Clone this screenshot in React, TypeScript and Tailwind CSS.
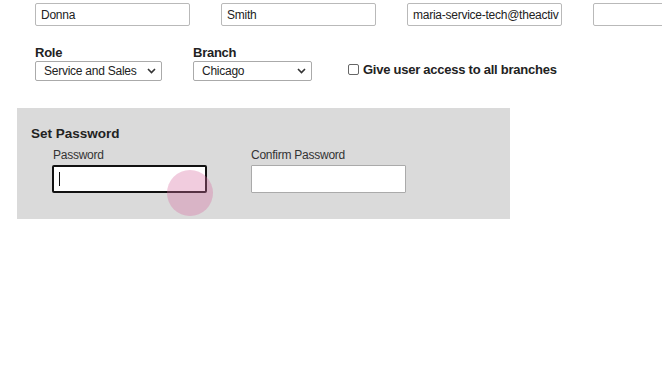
import React from "react";

const Chevron = () => (
  <svg width="9" height="6" viewBox="0 0 9 6" className="shrink-0">
    <path d="M1 1 L4.5 4.5 L8 1" fill="none" stroke="#333" strokeWidth="1.6" />
  </svg>
);

function TextBox({ value, w }: { value?: string; w: string }) {
  return (
    <div
      className={`${w} h-[23px] shrink-0 border border-[#b9b9b9] rounded-[2px] bg-white px-[5px] flex items-center text-[12px] tracking-[-0.25px] text-[#222] overflow-hidden whitespace-nowrap`}
    >
      {value}
    </div>
  );
}

function FakeSelect({ value, w }: { value: string; w: string }) {
  return (
    <div
      className={`${w} h-[20px] border border-[#aaa] rounded-[2px] bg-white pl-[8px] pr-[5px] flex items-center justify-between text-[12px] tracking-[-0.25px] text-[#222] whitespace-nowrap`}
    >
      <span>{value}</span>
      <Chevron />
    </div>
  );
}

export default function App() {
  return (
    <div
      className="w-[662px] h-[366px] bg-white overflow-hidden relative"
      style={{ fontFamily: '"Liberation Sans", Arial, sans-serif' }}
    >
      <div className="flex gap-[31px] pl-[35px] pt-[3px]">
        <TextBox value="Donna" w="w-[155px]" />
        <TextBox value="Smith" w="w-[155px]" />
        <TextBox value="maria-service-tech@theactiv" w="w-[155px]" />
        <TextBox w="w-[155px]" />
      </div>

      <div className="flex pl-[35px] mt-[19px] items-end">
        <div className="flex flex-col">
          <div className="text-[13px] font-bold tracking-[-0.25px] text-[#222] leading-[15px] mb-[1px]">Role</div>
          <FakeSelect value="Service and Sales" w="w-[127px]" />
        </div>
        <div className="flex flex-col ml-[31px]">
          <div className="text-[13px] font-bold tracking-[-0.25px] text-[#222] leading-[15px] mb-[1px]">Branch</div>
          <FakeSelect value="Chicago" w="w-[119px]" />
        </div>
        <div className="flex items-center ml-[36px] mb-[4px]">
          <div className="w-[11px] h-[11px] border border-[#666] rounded-[2px] bg-white mr-[4px]" />
          <span className="text-[13px] font-bold tracking-[-0.25px] text-[#222] leading-[15px]">
            Give user access to all branches
          </span>
        </div>
      </div>

      <div className="ml-[17px] mt-[27px] w-[493px] h-[111px] bg-[#dadada] pl-[14px] pt-[17px]">
        <div className="text-[13.5px] font-bold text-[#222] leading-[17px]">Set Password</div>
        <div className="flex mt-[6px] pl-[21px]">
          <div className="flex flex-col w-[155px]">
            <div className="text-[12px] tracking-[-0.25px] text-[#333] leading-[15px] mb-[2px] pl-[1px]">Password</div>
            <div className="h-[28px] border-2 border-[#111] rounded-[2px] bg-white flex items-center pl-[5px]">
              <div className="w-[1px] h-[14px] bg-[#111]" />
            </div>
          </div>
          <div className="flex flex-col w-[155px] ml-[44px]">
            <div className="text-[12px] tracking-[-0.25px] text-[#333] leading-[15px] mb-[2px]">Confirm Password</div>
            <div className="h-[28px] border border-[#aaa] rounded-[1px] bg-white" />
          </div>
        </div>
      </div>

      <div className="absolute left-[167px] top-[170px] w-[46px] h-[46px] rounded-full bg-[rgba(215,110,160,0.35)]" />
    </div>
  );
}
